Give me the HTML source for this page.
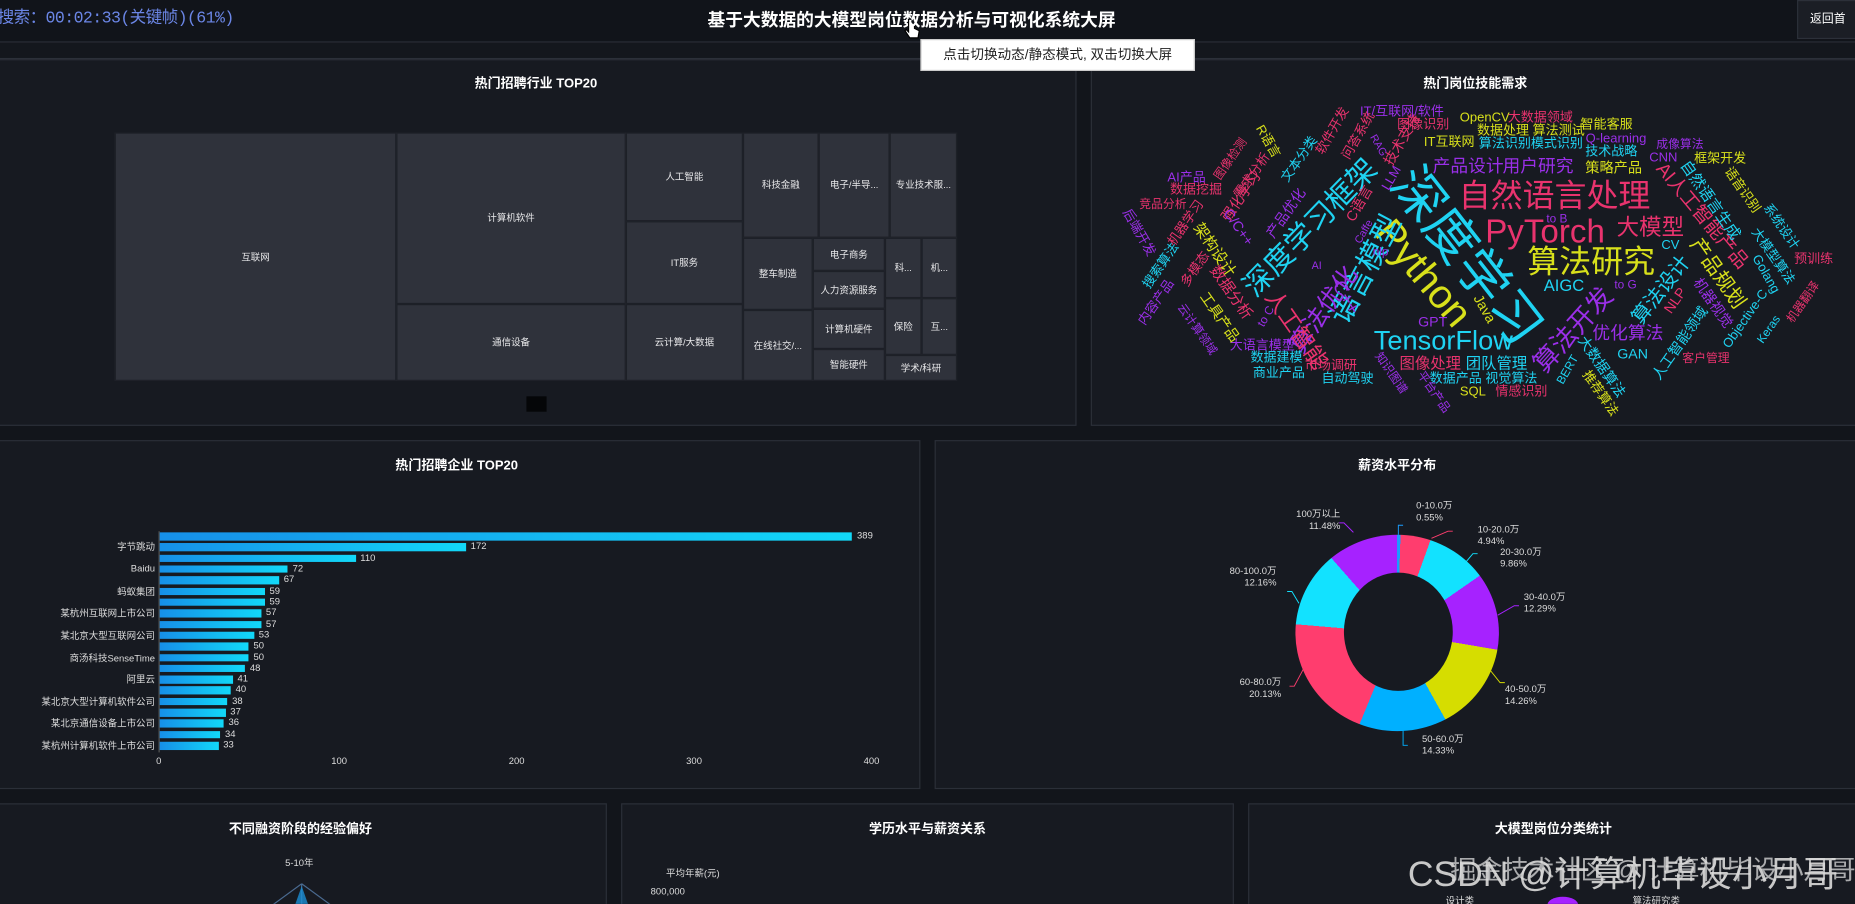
<!DOCTYPE html>
<html><head><meta charset="utf-8">
<style>
html,body{margin:0;padding:0;background:#12151b;overflow:hidden;width:1855px;height:903px}
#w{position:absolute;left:0;top:0;width:1568px;height:764px;overflow:hidden;transform:scale(1.18304);transform-origin:0 0;font-family:"Liberation Sans","Noto Sans CJK SC",sans-serif;color:#fff}
.a{position:absolute;white-space:nowrap}
.p{position:absolute;background:#171a21;border:1px solid #2b2f38;box-sizing:border-box}
.t{position:absolute;font-size:11px;font-weight:bold;transform:translateX(-50%);white-space:nowrap}
.c{position:absolute;background:#2f323b;color:#e8e8ea;font-size:8px;display:flex;align-items:center;justify-content:center;box-sizing:border-box;border:1px solid #1d2027;overflow:hidden;white-space:nowrap}
.w{position:absolute;white-space:nowrap;transform:translate(-50%,-50%);line-height:1}
.C{color:#1fd3f2}.P{color:#e9336e}.Y{color:#d8e01b}.V{color:#9a2fe8}
.bar{position:absolute;left:135px;height:6.5px;background:linear-gradient(90deg,#168fe8,#12d8f8)}
.v{position:absolute;font-size:8px;color:#ddd}
.yl{position:absolute;right:1437px;font-size:8px;color:#ddd;text-align:right}
.dl{position:absolute;font-size:8px;color:#ddd;line-height:10px}
</style></head><body><div id="w">
<div class="a" style="left:0;top:0;width:1568px;height:35px;background:#11141a;border-bottom:1px solid #2c3039"></div>
<div class="a" style="left:0;top:36px;width:1568px;height:13px;background:#14171d;border-bottom:1px solid #2c3039"></div>
<div class="a" style="left:-2px;top:4px;font-size:14px;color:#6b86e6;font-family:'Liberation Mono','Noto Sans CJK SC',monospace;letter-spacing:-0.5px">搜索：00:02:33(关键帧)(61%)</div>
<div class="a" style="left:598px;top:6px;font-size:15px;font-weight:bold">基于大数据的大模型岗位数据分析与可视化系统大屏</div>
<div class="a" style="left:1519px;top:0;width:60px;height:33px;background:#1b1e25;border:1px solid #2c3039;font-size:10px;line-height:31px;padding-left:10px;box-sizing:border-box">返回首</div>
<svg class="a" style="left:764px;top:14px" width="14" height="22" viewBox="0 0 14 22"><path d="M4 2v11l-2-2-1 1 4 6h7l1-6-4-2V8" fill="#fff" stroke="#000" stroke-width="1"/></svg>
<div class="a" style="left:778px;top:33px;width:232px;height:27px;background:#fff;color:#222;font-size:11.5px;line-height:27px;text-align:center;border:1px solid #ccc;box-sizing:border-box;z-index:5">点击切换动态/静态模式, 双击切换大屏</div>

<div class="p" style="left:-2px;top:50px;width:912px;height:310px"></div>
<div class="t" style="left:453px;top:62px">热门招聘行业 TOP20</div>
<div class="c" style="left:97px;top:112px;width:238px;height:210px">互联网</div>
<div class="c" style="left:335px;top:112px;width:194px;height:145px">计算机软件</div>
<div class="c" style="left:335px;top:257px;width:194px;height:65px">通信设备</div>
<div class="c" style="left:529px;top:112px;width:99px;height:75px">人工智能</div>
<div class="c" style="left:529px;top:187px;width:99px;height:70px">IT服务</div>
<div class="c" style="left:529px;top:257px;width:99px;height:65px">云计算/大数据</div>
<div class="c" style="left:628px;top:112px;width:64px;height:89px">科技金融</div>
<div class="c" style="left:692px;top:112px;width:60px;height:89px">电子/半导...</div>
<div class="c" style="left:752px;top:112px;width:57px;height:89px">专业技术服...</div>
<div class="c" style="left:628px;top:201px;width:59px;height:61px">整车制造</div>
<div class="c" style="left:628px;top:262px;width:59px;height:60px">在线社交/...</div>
<div class="c" style="left:687px;top:201px;width:61px;height:28px">电子商务</div>
<div class="c" style="left:687px;top:229px;width:61px;height:32px">人力资源服务</div>
<div class="c" style="left:687px;top:261px;width:61px;height:34px">计算机硬件</div>
<div class="c" style="left:687px;top:295px;width:61px;height:27px">智能硬件</div>
<div class="c" style="left:748px;top:201px;width:31px;height:51px">科...</div>
<div class="c" style="left:779px;top:201px;width:30px;height:51px">机...</div>
<div class="c" style="left:748px;top:252px;width:31px;height:48px">保险</div>
<div class="c" style="left:779px;top:252px;width:30px;height:48px">互...</div>
<div class="c" style="left:748px;top:300px;width:61px;height:22px">学术/科研</div>
<div class="a" style="left:445px;top:335px;width:17px;height:13px;background:#050608"></div>

<div class="p" style="left:922px;top:50px;width:660px;height:310px"></div>
<div class="t" style="left:1247px;top:62px">热门岗位技能需求</div>
<div style="position:absolute;left:0;top:0">
<span class="w C" style="left:1239px;top:217px;font-size:44px;transform:translate(-50%,-50%) rotate(52deg)">深度学习</span>
<span class="w P" style="left:1314px;top:166px;font-size:27px">自然语言处理</span>
<span class="w P" style="left:1306px;top:196px;font-size:28px">PyTorch</span>
<span class="w Y" style="left:1203px;top:231px;font-size:34px;transform:translate(-50%,-50%) rotate(50deg)">Python</span>
<span class="w Y" style="left:1345px;top:222px;font-size:27px">算法研究</span>
<span class="w C" style="left:1108px;top:193px;font-size:25px;transform:translate(-50%,-50%) rotate(-46deg)">深度学习框架</span>
<span class="w C" style="left:1155px;top:228px;font-size:25px;transform:translate(-50%,-50%) rotate(-62deg)">语言模型</span>
<span class="w C" style="left:1220px;top:288px;font-size:23px">TensorFlow</span>
<span class="w V" style="left:1330px;top:279px;font-size:22px;transform:translate(-50%,-50%) rotate(-48deg)">算法开发</span>
<span class="w P" style="left:1395px;top:193px;font-size:19px">大模型</span>
<span class="w P" style="left:1438px;top:183px;font-size:16px;transform:translate(-50%,-50%) rotate(50deg)">AI人工智能产品</span>
<span class="w Y" style="left:1452px;top:231px;font-size:17px;transform:translate(-50%,-50%) rotate(55deg)">产品规划</span>
<span class="w C" style="left:1404px;top:245px;font-size:17px;transform:translate(-50%,-50%) rotate(-52deg)">算法设计</span>
<span class="w V" style="left:1119px;top:262px;font-size:21px;transform:translate(-50%,-50%) rotate(-55deg)">算法优化</span>
<span class="w P" style="left:1095px;top:279px;font-size:19px;transform:translate(-50%,-50%) rotate(55deg)">人工智能</span>
<span class="w V" style="left:1137px;top:252px;font-size:16px;transform:translate(-50%,-50%) rotate(60deg)">C++</span>
<span class="w V" style="left:1241px;top:141px;font-size:15px">产品设计</span>
<span class="w V" style="left:1300px;top:141px;font-size:15px">用户研究</span>
<span class="w V" style="left:1376px;top:282px;font-size:15px">优化算法</span>
<span class="w C" style="left:1322px;top:241px;font-size:14px">AIGC</span>
<span class="w V" style="left:1211px;top:272px;font-size:12px">GPT</span>
<span class="w Y" style="left:1255px;top:261px;font-size:12px;transform:translate(-50%,-50%) rotate(60deg)">Java</span>
<span class="w P" style="left:1209px;top:307px;font-size:13px">图像处理</span>
<span class="w C" style="left:1265px;top:307px;font-size:13px">团队管理</span>
<span class="w C" style="left:1254px;top:321px;font-size:11px">数据产品 视觉算法</span>
<span class="w Y" style="left:1245px;top:332px;font-size:11px">SQL</span>
<span class="w P" style="left:1286px;top:332px;font-size:11px">情感识别</span>
<span class="w C" style="left:1139px;top:321px;font-size:11px">自动驾驶</span>
<span class="w P" style="left:1125px;top:310px;font-size:11px">市场调研</span>
<span class="w C" style="left:1079px;top:303px;font-size:11px">数据建模</span>
<span class="w C" style="left:1081px;top:316px;font-size:11px">商业产品</span>
<span class="w V" style="left:1067px;top:293px;font-size:11px">大语言模型</span>
<span class="w Y" style="left:1031px;top:268px;font-size:12px;transform:translate(-50%,-50%) rotate(55deg)">工具产品</span>
<span class="w P" style="left:1041px;top:247px;font-size:13px;transform:translate(-50%,-50%) rotate(55deg)">数据分析</span>
<span class="w Y" style="left:1027px;top:211px;font-size:13px;transform:translate(-50%,-50%) rotate(55deg)">架构设计</span>
<span class="w P" style="left:1049px;top:166px;font-size:12px;transform:translate(-50%,-50%) rotate(-55deg)">强化学习</span>
<span class="w V" style="left:1087px;top:180px;font-size:12px;transform:translate(-50%,-50%) rotate(-55deg)">产品优化</span>
<span class="w V" style="left:1047px;top:192px;font-size:12px;transform:translate(-50%,-50%) rotate(55deg)">C/C++</span>
<span class="w C" style="left:1099px;top:135px;font-size:11px;transform:translate(-50%,-50%) rotate(-55deg)">文本分类</span>
<span class="w P" style="left:1059px;top:149px;font-size:11px;transform:translate(-50%,-50%) rotate(-55deg)">需求分析</span>
<span class="w P" style="left:1041px;top:135px;font-size:10px;transform:translate(-50%,-50%) rotate(-55deg)">图像检测</span>
<span class="w V" style="left:1003px;top:151px;font-size:11px">AI产品</span>
<span class="w P" style="left:1011px;top:161px;font-size:11px">数据挖掘</span>
<span class="w P" style="left:983px;top:174px;font-size:10px">竞品分析</span>
<span class="w P" style="left:1003px;top:189px;font-size:11px;transform:translate(-50%,-50%) rotate(-55deg)">机器学习</span>
<span class="w V" style="left:962px;top:197px;font-size:11px;transform:translate(-50%,-50%) rotate(60deg)">后端开发</span>
<span class="w C" style="left:982px;top:225px;font-size:11px;transform:translate(-50%,-50%) rotate(-55deg)">搜索算法</span>
<span class="w P" style="left:1011px;top:228px;font-size:11px;transform:translate(-50%,-50%) rotate(-55deg)">多模态</span>
<span class="w V" style="left:978px;top:256px;font-size:11px;transform:translate(-50%,-50%) rotate(-55deg)">内容产品</span>
<span class="w V" style="left:1011px;top:279px;font-size:10px;transform:translate(-50%,-50%) rotate(55deg)">云计算领域</span>
<span class="w V" style="left:1071px;top:268px;font-size:10px;transform:translate(-50%,-50%) rotate(-60deg)">to C</span>
<span class="w V" style="left:1185px;top:95px;font-size:11px">IT/互联网/软件</span>
<span class="w Y" style="left:1255px;top:100px;font-size:11px">OpenCV</span>
<span class="w P" style="left:1302px;top:100px;font-size:11px">大数据领域</span>
<span class="w P" style="left:1203px;top:106px;font-size:11px">图像识别</span>
<span class="w Y" style="left:1294px;top:111px;font-size:11px">数据处理 算法测试</span>
<span class="w Y" style="left:1358px;top:106px;font-size:11px">智能客服</span>
<span class="w Y" style="left:1225px;top:121px;font-size:11px">IT互联网</span>
<span class="w C" style="left:1294px;top:122px;font-size:11px">算法识别模式识别</span>
<span class="w V" style="left:1366px;top:118px;font-size:11px">Q-learning</span>
<span class="w C" style="left:1362px;top:129px;font-size:11px">技术战略</span>
<span class="w Y" style="left:1364px;top:142px;font-size:12px">策略产品</span>
<span class="w V" style="left:1420px;top:123px;font-size:10px">成像算法</span>
<span class="w V" style="left:1406px;top:134px;font-size:11px">CNN</span>
<span class="w Y" style="left:1454px;top:135px;font-size:11px">框架开发</span>
<span class="w C" style="left:1446px;top:169px;font-size:13px;transform:translate(-50%,-50%) rotate(55deg)">自然语言生成</span>
<span class="w Y" style="left:1472px;top:161px;font-size:11px;transform:translate(-50%,-50%) rotate(55deg)">语音识别</span>
<span class="w C" style="left:1505px;top:192px;font-size:11px;transform:translate(-50%,-50%) rotate(55deg)">系统设计</span>
<span class="w C" style="left:1498px;top:217px;font-size:11px;transform:translate(-50%,-50%) rotate(55deg)">大模型算法</span>
<span class="w P" style="left:1533px;top:220px;font-size:11px">预训练</span>
<span class="w C" style="left:1492px;top:232px;font-size:11px;transform:translate(-50%,-50%) rotate(60deg)">Golang</span>
<span class="w P" style="left:1525px;top:256px;font-size:10px;transform:translate(-50%,-50%) rotate(-55deg)">机器翻译</span>
<span class="w C" style="left:1476px;top:270px;font-size:11px;transform:translate(-50%,-50%) rotate(-55deg)">Objective-C</span>
<span class="w C" style="left:1496px;top:279px;font-size:10px;transform:translate(-50%,-50%) rotate(-55deg)">Keras</span>
<span class="w V" style="left:1448px;top:256px;font-size:12px;transform:translate(-50%,-50%) rotate(55deg)">机器视觉</span>
<span class="w P" style="left:1416px;top:254px;font-size:12px;transform:translate(-50%,-50%) rotate(-55deg)">NLP</span>
<span class="w C" style="left:1420px;top:290px;font-size:12px;transform:translate(-50%,-50%) rotate(-55deg)">人工智能领域</span>
<span class="w P" style="left:1442px;top:304px;font-size:10px">客户管理</span>
<span class="w C" style="left:1380px;top:299px;font-size:12px">GAN</span>
<span class="w C" style="left:1354px;top:310px;font-size:12px;transform:translate(-50%,-50%) rotate(55deg)">大数据算法</span>
<span class="w C" style="left:1326px;top:313px;font-size:10px;transform:translate(-50%,-50%) rotate(-60deg)">BERT</span>
<span class="w Y" style="left:1352px;top:333px;font-size:11px;transform:translate(-50%,-50%) rotate(55deg)">推荐算法</span>
<span class="w V" style="left:1374px;top:242px;font-size:10px">to G</span>
<span class="w C" style="left:1412px;top:208px;font-size:11px">CV</span>
<span class="w V" style="left:1316px;top:186px;font-size:10px">to B</span>
<span class="w V" style="left:1175px;top:316px;font-size:10px;transform:translate(-50%,-50%) rotate(55deg)">知识图谱</span>
<span class="w V" style="left:1211px;top:332px;font-size:10px;transform:translate(-50%,-50%) rotate(55deg)">平台产品</span>
<span class="w V" style="left:1167px;top:214px;font-size:10px">nlp</span>
<span class="w V" style="left:1113px;top:225px;font-size:9px">AI</span>
<span class="w V" style="left:1153px;top:196px;font-size:9px;transform:translate(-50%,-50%) rotate(-60deg)">Caffe</span>
<span class="w P" style="left:1149px;top:172px;font-size:12px;transform:translate(-50%,-50%) rotate(-60deg)">C语言</span>
<span class="w V" style="left:1177px;top:151px;font-size:11px;transform:translate(-50%,-50%) rotate(-60deg)">LLM</span>
<span class="w V" style="left:1165px;top:123px;font-size:9px;transform:translate(-50%,-50%) rotate(60deg)">RAG</span>
<span class="w P" style="left:1185px;top:118px;font-size:12px;transform:translate(-50%,-50%) rotate(-60deg)">技术支持</span>
<span class="w P" style="left:1149px;top:115px;font-size:11px;transform:translate(-50%,-50%) rotate(-60deg)">问答系统</span>
<span class="w P" style="left:1127px;top:111px;font-size:11px;transform:translate(-50%,-50%) rotate(-60deg)">软件开发</span>
<span class="w Y" style="left:1071px;top:120px;font-size:11px;transform:translate(-50%,-50%) rotate(60deg)">R语言</span>
</div>

<div class="p" style="left:-2px;top:372px;width:780px;height:295px"></div>
<div class="t" style="left:386px;top:385px">热门招聘企业 TOP20</div>
<div class="a" style="left:134px;top:449px;width:1px;height:187px;background:#555"></div>
<div id="bars"></div>
<div class="v" style="left:132px;top:639px">0</div>
<div class="v" style="left:280px;top:639px">100</div>
<div class="v" style="left:430px;top:639px">200</div>
<div class="v" style="left:580px;top:639px">300</div>
<div class="v" style="left:730px;top:639px">400</div>

<div class="p" style="left:790px;top:372px;width:790px;height:295px"></div>
<div class="t" style="left:1181px;top:385px">薪资水平分布</div>
<div class="a" style="left:1095px;top:452px;width:172px;height:166px;border-radius:50%;background:conic-gradient(#1a9cff 0 0.55%,#ff3d6e 0.55% 5.49%,#12e2ff 5.49% 15.35%,#a622ff 15.35% 27.64%,#d6dd00 27.64% 41.9%,#00b0ff 41.9% 56.23%,#ff3d6e 56.23% 76.36%,#12e2ff 76.36% 88.52%,#a622ff 88.52% 100%)"></div>
<div class="a" style="left:1136px;top:484px;width:92px;height:100px;border-radius:50%;background:#171a21"></div>
<svg class="a" style="left:1040px;top:420px" width="300" height="220">
<g fill="none" stroke-width="0.8">
<path d="M142 32v-8h4" stroke="#1a9cff"/>
<path d="M170 35l14-6h4" stroke="#ff3d6e"/>
<path d="M195 60l10-12h4" stroke="#12e2ff"/>
<path d="M226 100l14-8h4" stroke="#a622ff"/>
<path d="M216 142l12 15h4" stroke="#d6dd00"/>
<path d="M146 196v14h4" stroke="#00b0ff"/>
<path d="M62 145l-8 15h-4" stroke="#ff3d6e"/>
<path d="M58 90l-6-10h-4" stroke="#12e2ff"/>
<path d="M104 30l-8-8h-4" stroke="#a622ff"/>
</g></svg>
<div class="dl" style="left:1197px;top:423px">0-10.0万<br>0.55%</div>
<div class="dl" style="left:1249px;top:443px">10-20.0万<br>4.94%</div>
<div class="dl" style="left:1268px;top:462px">20-30.0万<br>9.86%</div>
<div class="dl" style="left:1288px;top:500px">30-40.0万<br>12.29%</div>
<div class="dl" style="left:1272px;top:578px">40-50.0万<br>14.26%</div>
<div class="dl" style="left:1202px;top:620px">50-60.0万<br>14.33%</div>
<div class="dl" style="left:1043px;top:572px;text-align:right;width:40px">60-80.0万<br>20.13%</div>
<div class="dl" style="left:1030px;top:478px;text-align:right;width:49px">80-100.0万<br>12.16%</div>
<div class="dl" style="left:1083px;top:430px;text-align:right;width:50px">100万以上<br>11.48%</div>

<div class="p" style="left:-2px;top:679px;width:515px;height:100px"></div>
<div class="t" style="left:254px;top:692px">不同融资阶段的经验偏好</div>
<div class="a" style="left:241px;top:724px;font-size:8px;color:#ddd">5-10年</div>
<svg class="a" style="left:225px;top:746px" width="60" height="20"><path d="M30 1L4 20M30 1L56 20M30 1V20" stroke="#4a6a90" fill="none"/><path d="M30 3L24 20H36Z" fill="#1c8fd6" opacity=".8"/></svg>
<div class="p" style="left:525px;top:679px;width:518px;height:100px"></div>
<div class="t" style="left:784px;top:692px">学历水平与薪资关系</div>
<div class="a" style="left:563px;top:733px;font-size:8px;color:#ddd">平均年薪(元)</div>
<div class="a" style="left:550px;top:749px;font-size:8px;color:#ddd">800,000</div>
<div class="p" style="left:1055px;top:679px;width:525px;height:100px"></div>
<div class="t" style="left:1313px;top:692px">大模型岗位分类统计</div>
<div class="a" style="left:1222px;top:756px;font-size:8px;color:#ddd">设计类</div>
<div class="a" style="left:1380px;top:756px;font-size:8px;color:#ddd">算法研究类</div>
<div class="a" style="left:1308px;top:758px;width:26px;height:14px;border-radius:50%;background:#a622ff"></div>
<div class="a" style="left:1190px;top:714px;font-size:30px;color:#c8c8c8">CSDN @计算机毕设小月哥</div>
<div class="a" style="left:1226px;top:718px;font-size:22px;color:rgba(220,220,220,.75)">掘金技术社区 @ 计算机毕设小月哥</div>
</div>
<script>
var vals=[389,172,110,72,67,59,59,57,57,53,50,50,48,41,40,38,37,36,34,33];
var names={1:"字节跳动",3:"Baidu",5:"蚂蚁集团",7:"某杭州互联网上市公司",9:"某北京大型互联网公司",11:"商汤科技SenseTime",13:"阿里云",15:"某北京大型计算机软件公司",17:"某北京通信设备上市公司",19:"某杭州计算机软件上市公司"};
var h="";
for(var i=0;i<20;i++){var y=450+i*9.32;var w=vals[i]*1.505;
h+='<div class="bar" style="top:'+y+'px;width:'+w+'px"></div>';
h+='<div class="v" style="left:'+(139+w)+'px;top:'+(y-2)+'px">'+vals[i]+'</div>';
if(names[i])h+='<div class="yl" style="top:'+(y-2)+'px">'+names[i]+'</div>';}
document.getElementById("bars").innerHTML=h;
</script>
</body></html>
